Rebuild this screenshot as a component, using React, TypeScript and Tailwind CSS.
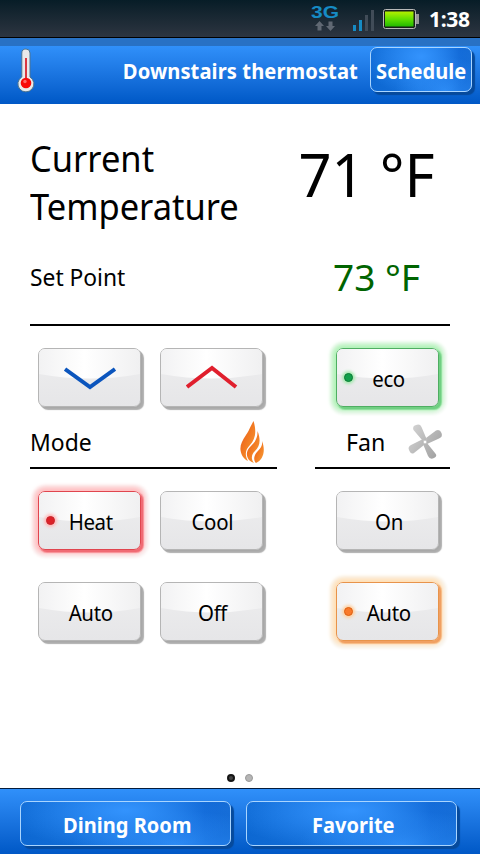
import React from 'react';
import clsx from 'clsx';

type Glow = 'green' | 'red' | 'orange';

interface PadButtonProps {
  label?: string;
  glow?: Glow;
  children?: React.ReactNode;
}

const glowStyles: Record<Glow, string> = {
  green: 'border-[#4fae62] shadow-[2px_2px_0_0_#70cf82,2px_2px_1px_1px_#8add98,0_0_5px_4px_#aef2b5,1px_1px_3px_7px_#f6f9f6]',
  red: 'border-[#e0454e] shadow-[2px_2px_0_0_#f06a73,2px_2px_1px_1px_#f88f95,0_0_5px_4px_#ffbdbf,1px_1px_3px_7px_#faf6f6]',
  orange: 'border-[#e8934a] shadow-[2px_2px_0_0_#f0a062,2px_2px_1px_1px_#f7b981,0_0_5px_4px_#ffdfb5,1px_1px_3px_7px_#f9f8f6]',
};

const dotStyles: Record<Glow, string> = {
  green: 'bg-[#12a04a] border-[#0b7c35] shadow-[0_0_3px_2px_#a5e8ae]',
  red: 'bg-[#dc2228] border-[#c8242b] shadow-[0_0_3px_2px_#ffb9b9]',
  orange: 'bg-[#f9792a] border-[#dc5f12] shadow-[0_0_3px_2px_#ffd0a0]',
};

const PadButton: React.FC<PadButtonProps> = ({ label, glow, children }) => (
  <button
    className={clsx(
      'relative flex h-[59px] w-[103px] items-center justify-center rounded-[7px] border bg-linear-to-b from-[#eeeeef] to-[#e6e6e8]',
      glow ? glowStyles[glow] : 'border-[#b5b5b5] shadow-[1px_1px_0_0_#a8a8a8,2px_2px_0_0_#adadad,3px_3px_1px_0_#b0b0b0]'
    )}
  >
    {/* glossy upper half */}
    <svg className="absolute inset-0 h-full w-full" viewBox="0 0 101 57" preserveAspectRatio="none">
      <defs>
        <linearGradient id="gloss" x1="0" x2="1" y1="0" y2="0">
          <stop offset="0" stopColor="#f2f2f3" />
          <stop offset="0.45" stopColor="#ffffff" />
          <stop offset="1" stopColor="#f0f0f1" />
        </linearGradient>
      </defs>
      <path d="M0 6Q0 0 6 0H95Q101 0 101 6V25Q51 34 0 25Z" fill="url(#gloss)" />
    </svg>
    {glow && <span className={clsx('absolute left-[7px] top-[24px] h-[9px] w-[9px] rounded-full border', dotStyles[glow])} />}
    {label && <span className="relative left-px scale-x-[0.93] text-[22px] leading-none tracking-[-0.4px]">{label}</span>}
    {children}
  </button>
);

const BlueButton: React.FC<{ label: string; className: string }> = ({ label, className }) => (
  <button
    className={clsx(
      'flex h-[45px] shrink-0 items-center justify-center rounded-[7px] border border-[#a9d5ff] pt-[4px] text-[21px] font-bold text-white shadow-[3px_3px_1px_0_#064a9c]',
      'bg-[radial-gradient(ellipse_60%_90%_at_50%_20%,#3393fd_0%,#3393fd00_100%),radial-gradient(ellipse_50%_80%_at_74%_100%,#2c8bf5_0%,#2c8bf500_100%),linear-gradient(90deg,#0d68d2_0%,#1570da_50%,#0357c6_88%,#1066d0_100%)]',
      className
    )}
  >
    <span className="scale-x-[0.955]">{label}</span>
  </button>
);

const StatusBar = () => (
  <div className="flex h-[38px] items-center justify-end border-b border-black bg-linear-to-b from-[#071d27] to-[#2d3541] pr-[9px]">
    <svg width="118" height="37" viewBox="303 0 118 37">
      <defs>
        <linearGradient id="charge" x1="0" x2="0" y1="0" y2="1">
          <stop offset="0" stopColor="#b4f000" />
          <stop offset="0.5" stopColor="#62df00" />
          <stop offset="1" stopColor="#22b900" />
        </linearGradient>
      </defs>
      <text x="311" y="18" textLength="28" lengthAdjust="spacingAndGlyphs" className="font-['Liberation_Sans',sans-serif] text-[16px] font-bold" fill="#168bc4">3G</text>
      <path d="M319.500 21L324 26H321.500V30.500H317.500V26H315ZM330.500 31L335 26H332.500V21.500H328.500V26H326Z" fill="#606873" />
      <path d="M353 25h3v6h-3zM359 20h3v11h-3z" fill="#168bc4" />
      <path d="M365 15h3v16h-3zM371 10h3v21h-3z" fill="#414c58" />
      <rect x="383.500" y="9.500" width="32" height="19" rx="2" fill="#182018" stroke="#b9b9b9" />
      <rect x="385" y="11.500" width="28.500" height="15" fill="url(#charge)" />
      <rect x="416" y="14" width="3" height="10" fill="#989898" />
    </svg>
    <span className="ml-[8px] w-[42px] pt-[2px] text-[21px] font-bold leading-none tracking-[-0.3px] text-white">1:38</span>
  </div>
);

const Thermometer = () => (
  <svg width="20" height="46" viewBox="16 49 20 46">
    <path d="M21.800 54Q21.800 50 26 50Q30 50 30 54V78A8 8 0 1 1 21.800 78Z" fill="#e9e9ea" stroke="#4e7590" strokeWidth="1" />
    <path d="M26 59V82" stroke="#d93842" strokeWidth="2" />
    <circle cx="26" cy="84" r="5.300" fill="#f80808" />
    <circle cx="25" cy="82.500" r="1.700" fill="#ff6868" />
  </svg>
);

const Flame = () => (
  <svg className="mt-[2px]" width="26" height="44" viewBox="239 421 26 44">
    <defs>
      <linearGradient id="fire" x1="0" x2="1" y1="0" y2="1">
        <stop offset="0" stopColor="#e7551c" />
        <stop offset="0.5" stopColor="#f27b22" />
        <stop offset="1" stopColor="#f8a23a" />
      </linearGradient>
    </defs>
    <g fill="url(#fire)">
      <path d="M253.500 421C250 427 249 431 246 435C242 441 240 445 240.500 450C241 455 244 459 248 461C244 454 246 449 250 445C255 440 257 432 253.500 421Z" />
      <path d="M257.500 431C258 439 254 443 250 447C246 451 246 456 249 460Q251 462 254 463C251 459 251 455 255 451C260 446 261 440 257.500 431Z" />
      <path d="M262 441C263 448 258 450 255.500 454C253.500 458 254 461 256 463C263 460 266 451 262 441Z" />
    </g>
  </svg>
);

const FanIcon = () => (
  <svg width="36" height="36" viewBox="407 424 36 36">
    <defs>
      <linearGradient id="blade" gradientUnits="userSpaceOnUse" x1="409" x2="442" y1="430" y2="452">
        <stop offset="0" stopColor="#d2d2d2" />
        <stop offset="1" stopColor="#a0a0a0" />
      </linearGradient>
    </defs>
    <g fill="url(#blade)">
      <path d="M422 440L413.500 430Q412 426 416 425Q420 423.500 421.500 427L427 440Z" />
      <path d="M426 438L436 430.500Q440 429 441.500 433Q443 437 439 438.500L427 444Z" />
      <path d="M427 443L435 453Q438 456 434 458Q430 460 428 456L423 444Z" />
      <path d="M424 445L414 453Q411 455 409 450Q407.500 447 411 445L423 439Z" />
    </g>
    <circle cx="425" cy="442" r="2" fill="#fff" stroke="#b5b5b5" />
  </svg>
);

export default function App() {
  return (
    <div className="flex h-[854px] w-[480px] flex-col overflow-hidden bg-white font-['Noto_Sans',sans-serif] text-black">
      <StatusBar />

      <header className="flex h-[66px] items-start border-t-8 border-[#2871c4] bg-linear-to-b from-[#3090fa] to-[#0058c6] pl-4">
        <div className="pt-[2px]">
          <Thermometer />
        </div>
        <h1 className="ml-auto mr-3 origin-right scale-x-[0.96] whitespace-nowrap pt-[10px] text-[21px] leading-[30px] font-bold tracking-[0.08px] text-white">Downstairs thermostat</h1>
        <BlueButton label="Schedule" className="mr-[8px] mt-px w-[102px]" />
      </header>

      <main className="flex h-[684px] flex-col px-[30px] pt-[31px]">
        <section className="flex h-[120px] justify-between">
          <p className="w-[230px] origin-left scale-x-[0.958] text-[36px] leading-[48px]">Current Temperature</p>
          <p className="origin-right scale-x-[0.965] pr-[16px] text-[60px] leading-[79px]">71 °F</p>
        </section>
        <section className="flex h-[71px] justify-between border-b-2 border-black pr-[30px]">
          <p className="origin-left scale-x-[0.95] pt-[6px] text-[24px] leading-[32px]">Set Point</p>
          <p className="text-[37px] leading-[43px] text-[#006400]">73 °F</p>
        </section>

        <section className="mt-[22px] flex pl-[8px]">
          <PadButton>
            <svg className="relative top-[2px]" width="52" height="26" viewBox="0 0 52 26">
              <path d="M1 2L26 20L51 2" fill="none" stroke="#0b55bd" strokeWidth="4" />
            </svg>
          </PadButton>
          <div className="ml-[19px]">
            <PadButton>
              <svg className="relative" width="52" height="26" viewBox="0 0 52 26">
                <path d="M1 22L26 3L50 22" fill="none" stroke="#e01f2d" strokeWidth="4" />
              </svg>
            </PadButton>
          </div>
          <div className="ml-[73px]">
            <PadButton label="eco" glow="green" />
          </div>
        </section>

        <section className="mt-[12px] flex h-[50px] justify-between text-[24px] leading-[32px]">
          <div className="flex w-[247px] justify-between border-b-2 border-black pr-[12px]">
            <span className="origin-left scale-x-[0.955] pt-[7px]">Mode</span>
            <Flame />
          </div>
          <div className="flex w-[135px] justify-between border-b-2 border-black pl-[31px] pr-[7px]">
            <span className="origin-left scale-x-[0.965] pt-[7px]">Fan</span>
            <span className="pt-[5px]"><FanIcon /></span>
          </div>
        </section>

        <section className="mt-[22px] grid grid-cols-[122px_176px_103px] gap-y-[32px] pl-[8px]">
          <PadButton label="Heat" glow="red" />
          <PadButton label="Cool" />
          <PadButton label="On" />
          <PadButton label="Auto" />
          <PadButton label="Off" />
          <PadButton label="Auto" glow="orange" />
        </section>

        <div className="mb-[6px] mt-auto flex justify-center gap-[10px]">
          <span className="h-2 w-2 rounded-full border-2 border-[#151515] bg-[#444]" />
          <span className="h-2 w-2 rounded-full border border-[#999] bg-[#b5b5b5]" />
        </div>
      </main>

      <footer className="flex h-[66px] gap-[15px] border-t border-[#041c3c] bg-linear-to-b from-[#3090fa] to-[#0058c6] pl-[20px] pt-[12px]">
        <BlueButton label="Dining Room" className="w-[211px] pl-[3px]" />
        <BlueButton label="Favorite" className="w-[211px] pl-[3px]" />
      </footer>
    </div>
  );
}
